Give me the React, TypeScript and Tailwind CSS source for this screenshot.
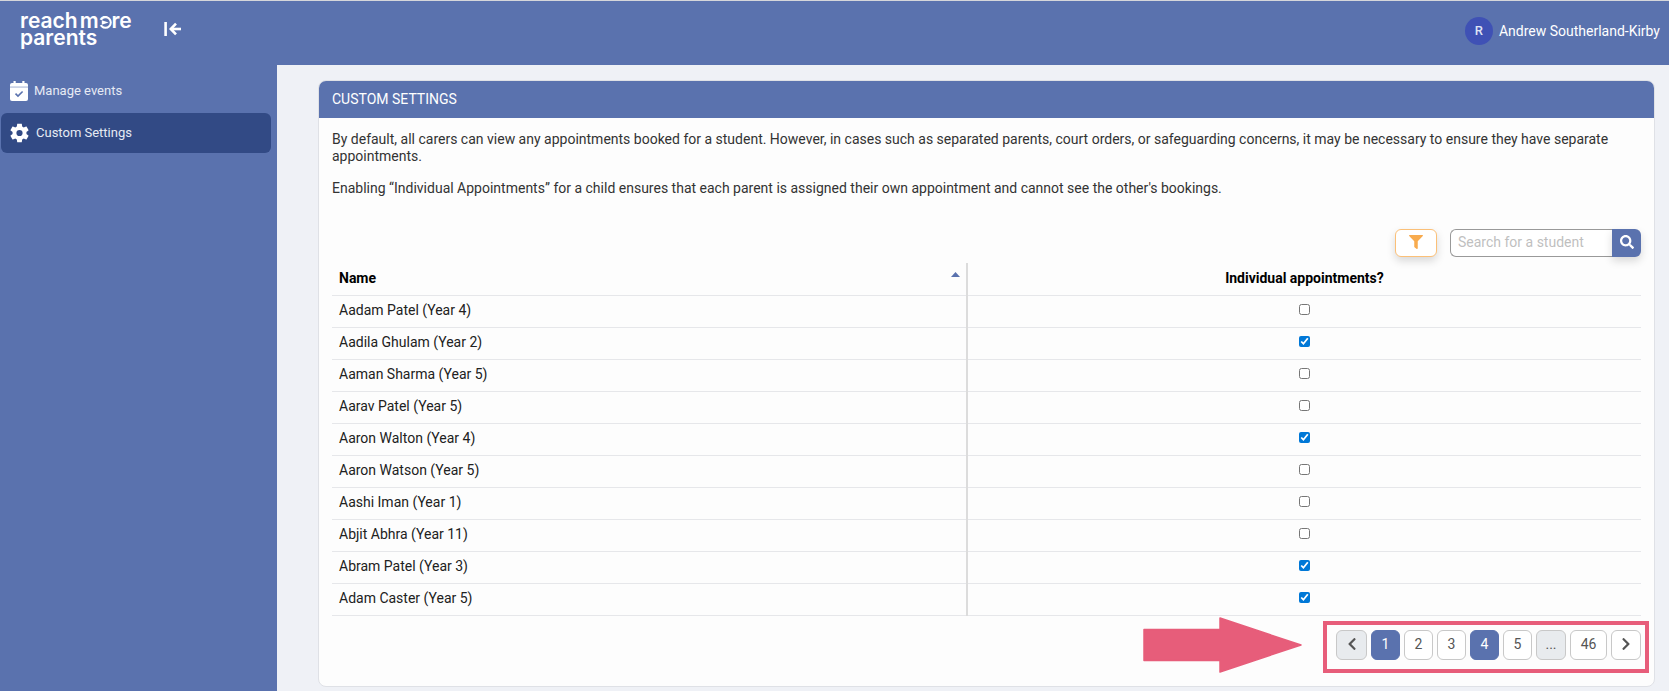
import { useState } from "react";
import { FaFilter, FaSearch, FaChevronLeft, FaChevronRight } from "react-icons/fa";

type Student = { name: string; individual: boolean };

const initialStudents: Student[] = [
  { name: "Aadam Patel (Year 4)", individual: false },
  { name: "Aadila Ghulam (Year 2)", individual: true },
  { name: "Aaman Sharma (Year 5)", individual: false },
  { name: "Aarav Patel (Year 5)", individual: false },
  { name: "Aaron Walton (Year 4)", individual: true },
  { name: "Aaron Watson (Year 5)", individual: false },
  { name: "Aashi Iman (Year 1)", individual: false },
  { name: "Abjit Abhra (Year 11)", individual: false },
  { name: "Abram Patel (Year 3)", individual: true },
  { name: "Adam Caster (Year 5)", individual: true },
];

export default function App() {
  return (
    <div className="min-h-screen flex flex-col bg-[#eff1f6] font-['Roboto',sans-serif] text-sm text-[#333]">
      <Header />
      <div className="flex flex-1">
        <Sidebar />
        <main className="flex-1 min-w-0 pl-[41px] pr-[14px] pt-[15px] pb-1">
          <SettingsCard />
        </main>
      </div>
    </div>
  );
}

function Header() {
  return (
    <header className="h-[65px] shrink-0 flex items-start justify-between bg-[#5a72ae] border-t border-[#d5d6da] text-white">
      <div className="flex items-start">
        <Logo />
        <button type="button" aria-label="Collapse menu" className="mt-5 ml-8">
          <svg width="18" height="16" viewBox="0 0 18 16" fill="none" stroke="currentColor" strokeWidth="2.6">
            <path d="M1.6 1v14" />
            <path d="M17 8H7" />
            <path d="M12 2.6 6.8 8l5.2 5.4" />
          </svg>
        </button>
      </div>
      <div className="flex items-center gap-[6px] mt-4 pr-[9px]">
        <span className="size-7 rounded-full bg-[#3f51b5] flex items-center justify-center font-medium text-[13px] text-[#dfe3f5]">R</span>
        <span>Andrew Southerland-Kirby</span>
      </div>
    </header>
  );
}

function Logo() {
  return (
    <a href="#" className="block ml-5 mt-[11px] w-28 font-['Inter',sans-serif] font-semibold text-[21px] leading-[17px]">
      <span className="flex gap-[2px]">
        <span>reach</span>
        <span>
          m
          <span className="relative">
            o
            {/* play mark sitting inside the letter */}
            <svg width="13" height="13" viewBox="0 0 13 13" className="absolute left-0 top-2">
              <circle cx="6.5" cy="6.5" r="5.300" fill="#5a72ae" stroke="#fff" strokeWidth="2" />
              <path d="M0 3.200 9.800 6.500 0 9.800z" fill="#5a72ae" />
              <path d="M2.800 4.300 9.600 6.500 2.800 8.700z" fill="#fff" />
            </svg>
          </span>
          re
        </span>
      </span>
      <span className="block">parents</span>
    </a>
  );
}

function Sidebar() {
  return (
    <nav className="w-[277px] shrink-0 bg-[#5a72ae] text-[13px] text-[#e6eaf4] pt-2">
      <a href="#" className="flex items-center gap-[6px] h-9 pl-[10px]">
        <svg width="18" height="20" viewBox="0 0 18 20">
          <path fill="#fff" d="M3.500 0h2.200v2h6.600V0h2.200v2H16a2 2 0 0 1 2 2v1H0V4a2 2 0 0 1 2-2h1.500z" />
          <path fill="#d5dcec" d="M0 5h18v1.500H0z" />
          <path fill="#fff" d="M0 6.500h18V18a2 2 0 0 1-2 2H2a2 2 0 0 1-2-2z" />
          <path fill="none" stroke="#5a72ae" strokeWidth="1.600" d="m5.500 12.600 2.500 2.500 4.600-4.600" />
        </svg>
        Manage events
      </a>
      <a href="#" aria-current="page" className="flex items-center gap-[7px] h-10 mt-1 ml-px mr-[6px] pl-[9px] rounded-md bg-[#324a85]">
        <GearIcon />
        Custom Settings
      </a>
    </nav>
  );
}

function GearIcon() {
  return (
    <svg width="19" height="20" viewBox="2.200 2 19.600 20" fill="#fff">
      <path d="M19.140 12.940c.040-.300.060-.610.060-.940 0-.320-.020-.640-.070-.940l2.030-1.580c.180-.140.230-.410.120-.610l-1.920-3.320c-.120-.220-.370-.290-.590-.220l-2.390.960c-.500-.380-1.030-.700-1.620-.940l-.360-2.540c-.040-.240-.240-.410-.480-.410h-3.840c-.240 0-.430.170-.470.410l-.360 2.540c-.590.240-1.130.570-1.620.940l-2.390-.960c-.220-.080-.470 0-.590.220L2.740 8.870c-.120.210-.080.470.120.610l2.030 1.580c-.050.300-.090.630-.090.940s.020.640.070.940l-2.030 1.580c-.180.140-.230.410-.120.610l1.920 3.320c.120.220.370.290.590.220l2.390-.960c.500.380 1.030.700 1.620.940l.360 2.540c.050.240.240.410.480.410h3.840c.240 0 .440-.170.470-.410l.360-2.540c.590-.240 1.130-.560 1.620-.940l2.390.960c.220.080.470 0 .590-.220l1.920-3.320c.120-.220.070-.470-.120-.610zM12 15.200a3.200 3.200 0 1 1 0-6.400 3.200 3.200 0 0 1 0 6.400z" />
    </svg>
  );
}

function SettingsCard() {
  return (
    <section className="rounded-lg bg-[#fdfdfd] border border-[#dfe1e6] overflow-hidden">
      <h1 className="h-[37px] flex items-center pb-px px-[13px] bg-[#5a72ae] text-white">CUSTOM SETTINGS</h1>
      <div className="p-[13px]">
        <p className="leading-[17px]">
          By default, all carers can view any appointments booked for a student. However, in cases such as separated
          parents, court orders, or safeguarding concerns, it may be necessary to ensure they have separate
          appointments.
        </p>
        <p className="leading-[17px] mt-[15px]">
          Enabling “Individual Appointments” for a child ensures that each parent is assigned their own appointment and
          cannot see the other's bookings.
        </p>
        <Toolbar />
        <StudentTable />
        <Pagination />
      </div>
    </section>
  );
}

function Toolbar() {
  return (
    <div className="flex justify-end gap-[13px] mt-8">
      <button
        type="button"
        aria-label="Filter"
        className="w-[42px] h-7 flex items-center justify-center pb-[2px] rounded-md border border-[#fbc078] bg-white text-[#f8ab4e] shadow-[0_4px_8px_rgba(0,0,0,0.15)]"
      >
        <FaFilter size={14} />
      </button>
      <form className="flex h-7">
        <input
          type="text"
          aria-label="Search for a student"
          placeholder="Search for a student"
          className="w-[162px] px-[7px] pb-[2px] rounded-l-md border border-r-0 border-[#999] bg-white placeholder:text-[#bfbfbf] outline-none"
        />
        <button
          type="button"
          aria-label="Search"
          className="w-[29px] flex items-center justify-center pb-[2px] rounded-r-md bg-[#5a72ae] text-white shadow-[0_4px_8px_rgba(0,0,0,0.15)]"
        >
          <FaSearch size={14} />
        </button>
      </form>
    </div>
  );
}

function StudentTable() {
  const [students, setStudents] = useState(initialStudents);

  const toggle = (index: number) =>
    setStudents(students.map((s, i) => (i === index ? { ...s, individual: !s.individual } : s)));

  return (
    <table className="w-full mt-[6px] table-fixed border-collapse text-[#212121]">
      <colgroup>
        <col className="w-[48.5%]" />
        <col />
      </colgroup>
      <thead>
        <tr className="h-8 border-b border-[#e6e7ea] text-black">
          <th className="p-0 pb-[2px] pl-[7px] border-r-2 border-r-[#dcdcdc] font-bold text-left">
            <button type="button" className="w-full flex justify-between pr-[6px] cursor-pointer">
              Name
              <svg width="9" height="5" viewBox="0 0 9 5" fill="#5a72ae" className="mt-1">
                <path d="M4.500 0 9 5H0z" />
              </svg>
            </button>
          </th>
          <th className="p-0 pb-[2px] font-bold text-center">Individual appointments?</th>
        </tr>
      </thead>
      <tbody>
        {students.map((student, i) => (
          <tr key={student.name} className="h-8 border-b border-[#e6e7ea]">
            <td className="p-0 pb-[2px] pl-[7px] border-r-2 border-r-[#dcdcdc]">
              <label htmlFor={`student-${i}`}>{student.name}</label>
            </td>
            <td className="p-0 pb-1">
              <input
                id={`student-${i}`}
                type="checkbox"
                checked={student.individual}
                onChange={() => toggle(i)}
                className="block mx-auto size-[11px] accent-[#0078d7]"
              />
            </td>
          </tr>
        ))}
      </tbody>
    </table>
  );
}

function Pagination() {
  const base = "h-[30px] flex items-center justify-center pb-[2px] rounded-md border";
  const plain = "border-[#c8c8c8] bg-white text-[#555]";
  const active = "border-[#5a72ae] bg-[#5a72ae] text-white";
  const muted = "border-[#c8c8c8] bg-[#e8ebee] text-[#555]";

  return (
    <div className="flex justify-end items-end gap-5 mt-px -mr-2">
      <svg width="160" height="56" viewBox="0 0 160 56" fill="#e75d7a">
        <path d="M1 12.500h76V1l81 27-81 27V43.500H1z" stroke="#e75d7a" strokeWidth="1.500" strokeLinejoin="round" />
      </svg>
      <nav aria-label="Pagination" className="flex gap-1 border-4 border-[#e75d7a] pt-[5px] pb-[9px] pl-[9px] pr-1">
        <button type="button" aria-label="Previous page" className={`${base} ${muted} w-[31px]`}>
          <FaChevronLeft size={14} />
        </button>
        <button type="button" className={`${base} ${active} w-[29px]`}>1</button>
        <button type="button" className={`${base} ${plain} w-[29px]`}>2</button>
        <button type="button" className={`${base} ${plain} w-[29px]`}>3</button>
        <button type="button" aria-current="page" className={`${base} ${active} w-[29px]`}>4</button>
        <button type="button" className={`${base} ${plain} w-[29px]`}>5</button>
        <button type="button" disabled className={`${base} ${muted} w-[30px]`}>...</button>
        <button type="button" className={`${base} ${plain} w-[37px]`}>46</button>
        <button type="button" aria-label="Next page" className={`${base} ${plain} w-[30px]`}>
          <FaChevronRight size={14} />
        </button>
      </nav>
    </div>
  );
}
